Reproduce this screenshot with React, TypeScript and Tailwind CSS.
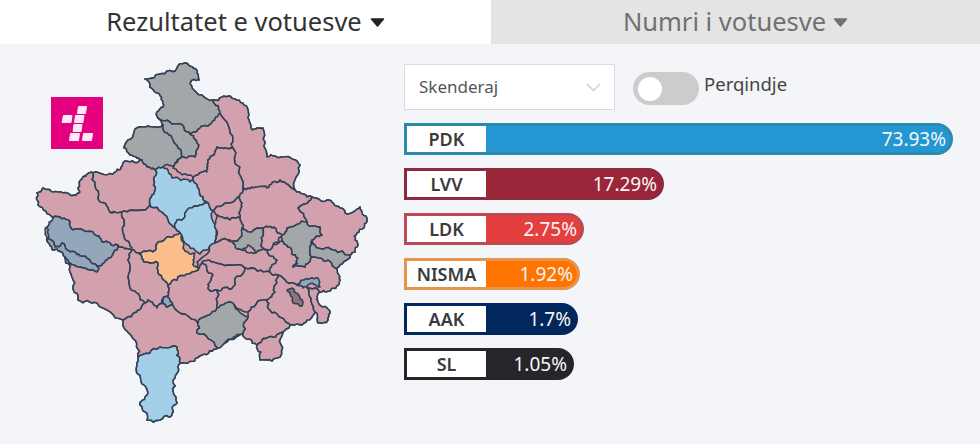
import React from "react";

type Pt = [number, number];

function hash(a: number, b: number, c: number, d: number): number {
  const s = Math.sin(a * 12.9898 + b * 78.233 + c * 37.719 + d * 94.673) * 43758.5453;
  return s - Math.floor(s);
}

function roughEdge(p: Pt, q: Pt, depth: number): Pt[] {
  const flip = p[0] > q[0] || (p[0] === q[0] && p[1] > q[1]);
  const a = flip ? q : p;
  const b = flip ? p : q;
  const dx = b[0] - a[0];
  const dy = b[1] - a[1];
  const len = Math.hypot(dx, dy);
  if (depth === 0 || len < 2.6) return [p];
  const amt = (hash(a[0], a[1], b[0], b[1]) - 0.5) * Math.min(len * 0.5, 5);
  const m: Pt = [(a[0] + b[0]) / 2 - (dy / len) * amt, (a[1] + b[1]) / 2 + (dx / len) * amt];
  return [...roughEdge(p, m, depth - 1), ...roughEdge(m, q, depth - 1)];
}

function toPath(points: Pt[]): string {
  const out: Pt[] = [];
  points.forEach((p, i) => out.push(...roughEdge(p, points[(i + 1) % points.length], 3)));
  return "M" + out.map((p) => `${p[0].toFixed(1)} ${p[1].toFixed(1)}`).join("L") + "Z";
}

const PINK = "#d3a1ad";
const GREY = "#a4a7a9";
const BLUE = "#a3cfe8";
const ORANGE = "#fdbd8a";
const SLATE = "#94a6ba";

const outline: Pt[] = [[145, 79], [167, 71], [185, 63], [197, 73], [199, 80], [190, 83], [192, 88], [213, 100], [222, 97], [235, 99], [248, 110], [252, 130], [263, 128], [267, 157], [283, 157], [300, 165], [295, 190], [312, 197], [327, 200], [340, 208], [345, 213], [360, 207], [367, 220], [357, 233], [357, 247], [350, 255], [337, 268], [340, 280], [333, 288], [320, 292], [318, 302], [330, 313], [328, 320], [318, 323], [315, 312], [302, 325], [290, 325], [283, 332], [280, 357], [272, 361], [260, 360], [257, 345], [243, 333], [218, 348], [202, 355], [185, 363], [180, 363], [173, 380], [177, 403], [170, 417], [160, 420], [147, 420], [140, 405], [148, 393], [137, 365], [138, 357], [132, 337], [123, 320], [97, 303], [78, 300], [72, 277], [65, 257], [53, 250], [47, 241], [47, 227], [53, 218], [38, 205], [37, 193], [43, 188], [60, 192], [70, 195], [80, 192], [83, 177], [93, 173], [115, 172], [123, 163], [142, 160], [132, 155], [124, 148], [128, 140], [143, 127], [153, 127], [163, 125], [158, 118], [157, 112], [163, 107], [157, 93]];

const regions: { fill: string; pts: Pt[] }[] = [
  { fill: GREY, pts: [[145, 79], [167, 71], [185, 63], [197, 73], [199, 80], [190, 83], [192, 88], [213, 100], [220, 113], [212, 122], [200, 128], [190, 134], [177, 124], [158, 118], [157, 112], [163, 107], [157, 93]] },
  { fill: GREY, pts: [[158, 118], [177, 124], [190, 134], [199, 145], [195, 157], [182, 157], [173, 140], [163, 125]] },
  { fill: GREY, pts: [[163, 125], [173, 140], [182, 157], [172, 166], [163, 167], [155, 170], [142, 160], [132, 155], [124, 148], [128, 140], [143, 127], [153, 127]] },
  { fill: PINK, pts: [[190, 134], [200, 128], [212, 122], [220, 113], [233, 140], [233, 148], [217, 147], [208, 160], [207, 172], [193, 177], [173, 168], [182, 157], [195, 157], [199, 145]] },
  { fill: PINK, pts: [[213, 100], [222, 97], [235, 99], [248, 110], [252, 130], [263, 128], [267, 157], [283, 157], [300, 165], [295, 190], [280, 180], [267, 188], [257, 187], [243, 187], [233, 148], [233, 140], [220, 113]] },
  { fill: PINK, pts: [[217, 147], [233, 148], [243, 187], [238, 197], [233, 202], [213, 211], [208, 203], [203, 197], [193, 177], [207, 172], [208, 160]] },
  { fill: BLUE, pts: [[155, 170], [163, 167], [172, 178], [190, 182], [193, 177], [203, 197], [208, 203], [187, 210], [185, 217], [177, 220], [175, 228], [163, 213], [150, 205], [155, 190]] },
  { fill: BLUE, pts: [[208, 203], [213, 211], [216, 237], [215, 243], [200, 254], [183, 240], [180, 233], [175, 228], [177, 220], [185, 217], [187, 210]] },
  { fill: PINK, pts: [[37, 193], [43, 188], [60, 192], [70, 195], [80, 192], [83, 177], [93, 173], [98, 198], [110, 212], [122, 212], [123, 233], [132, 250], [118, 245], [102, 242], [93, 232], [73, 230], [70, 222], [53, 218], [38, 205]] },
  { fill: PINK, pts: [[93, 173], [115, 172], [123, 163], [142, 160], [155, 170], [155, 190], [150, 205], [127, 212], [110, 212], [98, 198]] },
  { fill: PINK, pts: [[122, 212], [127, 212], [150, 205], [163, 213], [175, 228], [180, 233], [173, 237], [158, 242], [153, 252], [138, 253], [132, 250], [123, 233]] },
  { fill: SLATE, pts: [[47, 227], [53, 218], [70, 222], [73, 230], [93, 232], [102, 242], [118, 245], [107, 260], [97, 266], [80, 256], [67, 250], [62, 243], [55, 247], [48, 238]] },
  { fill: SLATE, pts: [[48, 238], [55, 247], [62, 243], [67, 250], [80, 256], [97, 266], [99, 268], [97, 272], [78, 267], [65, 257], [53, 250], [47, 241]] },
  { fill: PINK, pts: [[65, 257], [78, 267], [97, 272], [99, 268], [97, 266], [107, 260], [118, 245], [132, 250], [128, 260], [130, 288], [145, 303], [138, 310], [123, 320], [97, 303], [78, 300], [72, 277]] },
  { fill: PINK, pts: [[132, 250], [138, 253], [147, 262], [158, 263], [158, 273], [168, 285], [168, 297], [163, 298], [157, 308], [148, 300], [145, 303], [130, 288], [128, 260]] },
  { fill: PINK, pts: [[123, 320], [138, 310], [145, 303], [148, 300], [157, 308], [163, 298], [167, 307], [173, 305], [198, 323], [197, 333], [218, 348], [202, 355], [185, 363], [180, 363], [177, 347], [160, 347], [138, 357], [132, 337]] },
  { fill: SLATE, pts: [[163, 298], [168, 297], [173, 305], [167, 307]] },
  { fill: PINK, pts: [[168, 285], [177, 280], [198, 270], [202, 263], [213, 275], [208, 288], [217, 290], [217, 308], [198, 323], [173, 305], [168, 297]] },
  { fill: BLUE, pts: [[138, 357], [160, 347], [177, 347], [180, 363], [173, 380], [177, 403], [170, 417], [160, 420], [147, 420], [140, 405], [148, 393], [137, 365]] },
  { fill: PINK, pts: [[198, 270], [197, 262], [215, 243], [228, 240], [242, 250], [255, 253], [268, 250], [277, 260], [270, 272], [245, 268], [213, 262], [202, 263]] },
  { fill: PINK, pts: [[202, 263], [213, 262], [245, 268], [233, 287], [217, 290], [208, 288], [213, 275]] },
  { fill: PINK, pts: [[245, 268], [270, 272], [278, 275], [277, 283], [275, 292], [267, 300], [248, 312], [230, 302], [217, 308], [217, 290], [233, 287]] },
  { fill: PINK, pts: [[238, 197], [243, 187], [257, 187], [267, 188], [280, 180], [295, 190], [312, 197], [308, 203], [298, 208], [307, 222], [287, 228], [282, 235], [268, 227], [263, 228], [250, 232], [242, 228], [240, 217], [242, 203]] },
  { fill: PINK, pts: [[213, 211], [233, 202], [238, 197], [242, 203], [240, 217], [230, 220], [217, 215]] },
  { fill: PINK, pts: [[217, 215], [230, 220], [240, 217], [242, 228], [240, 238], [228, 240], [215, 243], [216, 237]] },
  { fill: GREY, pts: [[228, 240], [240, 238], [242, 228], [250, 232], [263, 228], [263, 248], [268, 250], [255, 253], [248, 245], [242, 250], [235, 245]] },
  { fill: PINK, pts: [[263, 228], [268, 227], [282, 235], [273, 245], [268, 250], [263, 248]] },
  { fill: PINK, pts: [[298, 208], [308, 203], [312, 197], [327, 200], [340, 208], [345, 213], [360, 207], [367, 220], [357, 233], [357, 247], [350, 255], [333, 250], [315, 245], [312, 240], [322, 235], [320, 227], [308, 225], [307, 222]] },
  { fill: PINK, pts: [[273, 245], [282, 240], [288, 247], [298, 258], [293, 267], [305, 267], [312, 257], [320, 258], [328, 260], [337, 268], [340, 280], [333, 288], [320, 292], [307, 287], [297, 285], [278, 275], [270, 272], [277, 260], [268, 250]] },
  { fill: GREY, pts: [[282, 235], [287, 228], [307, 222], [308, 225], [320, 227], [322, 235], [312, 240], [312, 257], [305, 267], [293, 267], [298, 258], [288, 247], [282, 240]] },
  { fill: GREY, pts: [[315, 245], [333, 250], [350, 255], [337, 268], [328, 260], [320, 258], [312, 257], [312, 240]] },
  { fill: PINK, pts: [[278, 275], [297, 285], [307, 287], [310, 297], [315, 312], [302, 325], [290, 325], [287, 323], [272, 313], [267, 300], [275, 292], [277, 283]] },
  { fill: PINK, pts: [[307, 287], [320, 292], [318, 302], [330, 313], [328, 320], [318, 323], [315, 312], [310, 297]] },
  { fill: SLATE, pts: [[297, 285], [302, 280], [318, 278], [320, 287], [308, 285], [303, 288]] },
  { fill: "#8e707f", pts: [[287, 290], [292, 288], [303, 302], [302, 306], [293, 303]] },
  { fill: PINK, pts: [[248, 312], [267, 300], [272, 313], [287, 323], [290, 325], [283, 332], [267, 338], [257, 345], [243, 333], [248, 317]] },
  { fill: PINK, pts: [[257, 345], [267, 338], [283, 332], [280, 357], [272, 361], [260, 360]] },
  { fill: GREY, pts: [[197, 333], [198, 323], [217, 308], [230, 302], [248, 317], [243, 333], [233, 338], [218, 348]] },
  { fill: ORANGE, pts: [[138, 253], [153, 252], [158, 242], [173, 237], [180, 233], [183, 248], [195, 253], [193, 260], [198, 270], [177, 280], [168, 285], [158, 273], [158, 263], [147, 262]] },
];

function KosovoMap() {
  return (
    <svg width="390" height="380" viewBox="0 50 390 380" className="block">
      <path d={toPath(outline)} fill={PINK} stroke="#2f4256" strokeWidth="1.6" strokeLinejoin="round" />
      {regions.map((r, i) => (
        <path key={i} d={toPath(r.pts)} fill={r.fill} stroke="#2f4256" strokeWidth="1.6" strokeLinejoin="round" />
      ))}
    </svg>
  );
}

function Logo() {
  return (
    <svg width="52" height="52" viewBox="0 0 52 52" className="block">
      <rect width="52" height="52" fill="#e5007f" />
      <g fill="#fdeaf5" stroke="#fdeaf5" strokeWidth="1" strokeLinejoin="round">
        <path d="M27.500 9.500h8l-1 7h-8z" />
        <path d="M12.500 18.500h8.500l-1 7h-9z" />
        <path d="M24.500 18.500h8.500l-1 7h-8.500z" />
        <path d="M23 27.500h8l-1 7h-8z" />
        <path d="M19.500 36.500h9l-1 7h-9z" />
        <path d="M32.500 36.500h9l-1 7h-9z" />
      </g>
    </svg>
  );
}

function Caret({ color }: { color: string }) {
  return (
    <svg width="15" height="9" viewBox="0 0 15 9" className="block">
      <path d="M1.500 1h12L7.500 8z" fill={color} stroke={color} strokeWidth="1.500" strokeLinejoin="round" />
    </svg>
  );
}

function Bar({ name, pct, width, fill, border }: { name: string; pct: string; width: string; fill: string; border: string }) {
  return (
    <div className={`flex h-[32px] items-center rounded-r-[16px] border-[3px] pr-[4px] ${width} ${fill} ${border}`}>
      <div className="flex h-full w-[79px] shrink-0 items-center justify-center bg-white pb-[1px] text-[18px] font-semibold leading-none text-[#3a3a3a]">
        {name}
      </div>
      <div className="flex-1 text-right text-[19px] leading-none text-[#f6f6f6]">{pct}</div>
    </div>
  );
}

export default function App() {
  return (
    <div className="h-[444px] w-[980px] overflow-hidden bg-[#f4f5f8] font-['Noto_Sans','Lato',sans-serif]">
      <div className="flex h-[44px]">
        <div className="flex w-[491px] items-center justify-center gap-[8px] bg-white text-[25.500px] leading-none text-[#333]">
          <span>Rezultatet e votuesve</span>
          <Caret color="#222" />
        </div>
        <div className="flex w-[489px] items-center justify-center gap-[7px] bg-[#e4e4e4] text-[25.500px] leading-none text-[#707070]">
          <span>Numri i votuesve</span>
          <Caret color="#707070" />
        </div>
      </div>
      <div className="flex">
        <div className="relative h-[400px] w-[404px] shrink-0 pt-[6px]">
          <KosovoMap />
          <div className="absolute left-[51px] top-[53px]">
            <Logo />
          </div>
        </div>
        <div className="flex flex-col pt-[20px]">
          <div className="flex items-start">
            <div className="flex h-[46px] w-[211px] items-center justify-between border border-[#d6dce4] bg-white pl-[14px] pr-[13px] text-[17px] text-[#555]">
              <span>Skenderaj</span>
              <svg width="15" height="9" viewBox="0 0 15 9" className="block" fill="none" stroke="#c9cdd2" strokeWidth="1.3">
                <path d="M1 1l6.500 6.500L14 1" />
              </svg>
            </div>
            <div className="ml-[18px] mt-[8px] flex h-[33px] w-[66px] items-center rounded-full bg-[#cccccc] pl-[5px]">
              <div className="h-[24px] w-[24px] rounded-full bg-white" />
            </div>
            <span className="ml-[5px] mt-[7px] text-[18.500px] leading-[26px] text-[#444]">Perqindje</span>
          </div>
          <div className="mt-[13px] flex flex-col gap-[13px]">
            <Bar name="PDK" pct="73.93%" width="w-[549px]" fill="bg-[#2497d3]" border="border-[#2b8bac]" />
            <Bar name="LVV" pct="17.29%" width="w-[260px]" fill="bg-[#9b2539]" border="border-[#8d2a3d]" />
            <Bar name="LDK" pct="2.75%" width="w-[180px]" fill="bg-[#e53e3e]" border="border-[#bb4a55]" />
            <Bar name="NISMA" pct="1.92%" width="w-[176px]" fill="bg-[#ff7300]" border="border-[#e8934d]" />
            <Bar name="AAK" pct="1.7%" width="w-[174px]" fill="bg-[#02275c]" border="border-[#02275c]" />
            <Bar name="SL" pct="1.05%" width="w-[170px]" fill="bg-[#26262a]" border="border-[#26262a]" />
          </div>
        </div>
      </div>
    </div>
  );
}
